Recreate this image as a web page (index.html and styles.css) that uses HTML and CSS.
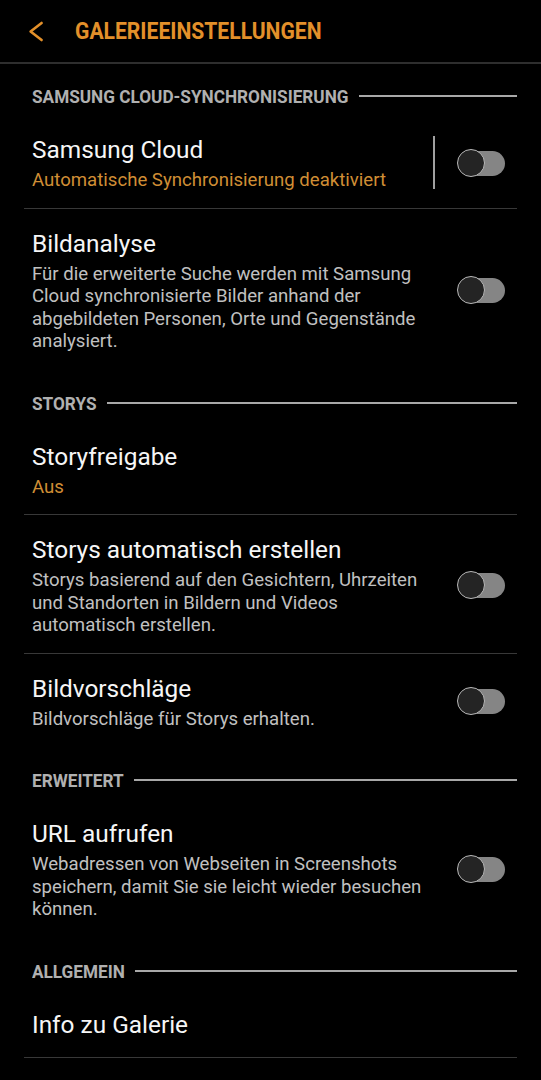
FILE: index.html
```html
<!DOCTYPE html>
<html lang="de">
<head>
<meta charset="utf-8">
<title>Galerieeinstellungen</title>
<link rel="stylesheet" href="styles.css">
</head>
<body>
<div class="screen">
  <header class="appbar">
    <svg class="back" width="18" height="23" viewBox="0 0 18 23"><path d="M15.6 3 L4.6 11.5 L15.6 20" fill="none" stroke="#e3902a" stroke-width="2.6" stroke-linecap="round" stroke-linejoin="round"/></svg>
    <h1 class="title"><span class="cond">GALERIEEINSTELLUNGEN</span></h1>
  </header>

  <div class="section"><span class="sec-label"><span class="cond">SAMSUNG CLOUD-SYNCHRONISIERUNG</span></span><span class="sec-line"></span></div>
  <div class="row divided">
    <div class="text">
      <div class="r-title">Samsung Cloud</div>
      <div class="r-sub orange">Automatische Synchronisierung deaktiviert</div>
    </div>
    <span class="vline"></span>
    <span class="toggle"><span class="knob"></span></span>
  </div>
  <div class="row">
    <div class="text">
      <div class="r-title">Bildanalyse</div>
      <div class="r-sub">Für die erweiterte Suche werden mit Samsung Cloud synchronisierte Bilder anhand der abgebildeten Personen, Orte und Gegenstände analysiert.</div>
    </div>
    <span class="toggle"><span class="knob"></span></span>
  </div>

  <div class="section"><span class="sec-label"><span class="cond">STORYS</span></span><span class="sec-line"></span></div>
  <div class="row divided">
    <div class="text">
      <div class="r-title">Storyfreigabe</div>
      <div class="r-sub orange">Aus</div>
    </div>
  </div>
  <div class="row divided">
    <div class="text">
      <div class="r-title">Storys automatisch erstellen</div>
      <div class="r-sub">Storys basierend auf den Gesichtern, Uhrzeiten und Standorten in Bildern und Videos automatisch erstellen.</div>
    </div>
    <span class="toggle"><span class="knob"></span></span>
  </div>
  <div class="row">
    <div class="text">
      <div class="r-title">Bildvorschläge</div>
      <div class="r-sub">Bildvorschläge für Storys erhalten.</div>
    </div>
    <span class="toggle"><span class="knob"></span></span>
  </div>

  <div class="section"><span class="sec-label"><span class="cond">ERWEITERT</span></span><span class="sec-line"></span></div>
  <div class="row">
    <div class="text">
      <div class="r-title">URL aufrufen</div>
      <div class="r-sub">Webadressen von Webseiten in Screenshots speichern, damit Sie sie leicht wieder besuchen können.</div>
    </div>
    <span class="toggle"><span class="knob"></span></span>
  </div>

  <div class="section"><span class="sec-label"><span class="cond">ALLGEMEIN</span></span><span class="sec-line"></span></div>
  <div class="row divided">
    <div class="text">
      <div class="r-title">Info zu Galerie</div>
    </div>
  </div>
</div>
</body>
</html>
```
FILE: styles.css
```css
* { box-sizing: border-box; }
html, body { margin: 0; padding: 0; background: #000; }
body { font-family: Roboto, "Noto Sans", "Liberation Sans", sans-serif; color: #f4f4f4; }
.screen { width: 541px; min-height: 1080px; background: #000; overflow: hidden; }

.appbar {
  height: 64px;
  display: flex;
  align-items: center;
  padding-left: 26px;
  border-bottom: 2px solid #2e2e2e;
}
.back { flex: none; margin-top: 1px; }
.title {
  margin: 0 0 0 31px;
  font-size: 21.1px;
  font-weight: 700;
  color: #e3902a;
  line-height: 28px;
  white-space: nowrap;
}
.cond { display: inline-block; transform-origin: center center; }
.title .cond { transform: scaleY(1.15); }

.section {
  display: flex;
  align-items: center;
  padding: 22px 24px 7px 32px;
}
.appbar + .section { padding-top: 20px; }
.sec-label {
  font-size: 17.2px;
  font-weight: 700;
  line-height: 24px;
  color: #b0b0b0;
  white-space: nowrap;
  flex: none;
}
.sec-label .cond { transform: scaleY(1.1); }
.sec-line { flex: 1; height: 2px; background: #a8a8a8; margin-left: 10px; }

.row {
  display: flex;
  align-items: center;
  margin: 0 24px;
  padding: 19px 12px 16px 8px;
}
.row.divided { border-bottom: 1px solid #383838; }
.text { flex: 1; min-width: 0; }
.r-title { font-size: 24.4px; line-height: 32px; color: #f6f6f6; }
.r-sub { font-size: 18.6px; line-height: 22.5px; color: #c0c0c0; margin-top: 3px; }
.r-sub.orange { color: #d08e35; }

.vline { flex: none; width: 1.5px; height: 53px; background: #a0a0a0; margin: 0 5.5px 0 10px; }

.toggle {
  flex: none;
  position: relative;
  width: 48px;
  height: 28px;
  margin-left: 17px;
}
.toggle::before {
  content: "";
  position: absolute;
  left: 8px; right: 0; top: 2px; bottom: 1px;
  border-radius: 13px;
  background: #858585;
}
.knob {
  position: absolute;
  left: 0; top: 0;
  width: 28px; height: 28px;
  border-radius: 50%;
  background: #242424;
  border: 1px solid #b8b8b8;
}
```
